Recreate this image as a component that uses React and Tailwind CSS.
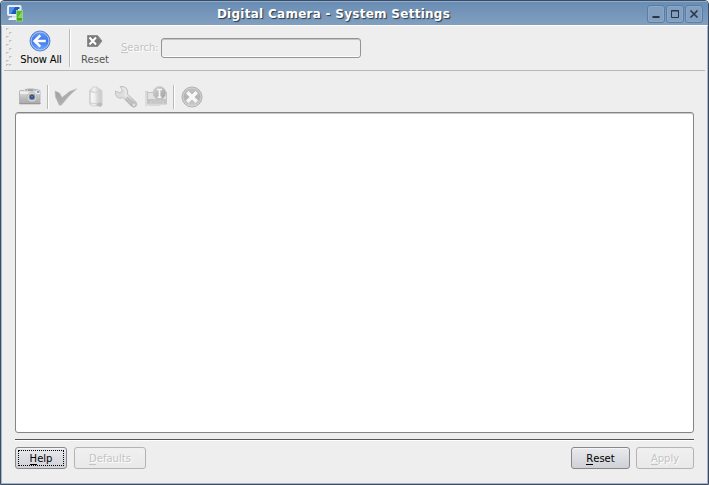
import React from 'react';

function AppIcon() {
  return (
    <svg width="18" height="18" viewBox="0 0 18 18">
      <rect x="0.500" y="0.500" width="13.500" height="10" rx="1" fill="#e9eff7" stroke="#e4ebf4" />
      <rect x="2" y="2" width="10.500" height="7" fill="#1c58bd" />
      <path d="M2 2h6L4 9H2z" fill="#4f92ea" />
      <rect x="5" y="11" width="5" height="2" fill="#cfd7df" />
      <path d="M2.500 12.500h8v2.500H1z" fill="#f1f3f5" />
      <rect x="9.500" y="5.500" width="6" height="10.500" fill="#58b82c" stroke="#a9d597" strokeWidth="0.800" />
      <rect x="11" y="4" width="3" height="1.500" fill="#dfe9da" />
      <path d="M11 12l4-5.500v9h-4z" fill="#86d95a" />
      <path d="M10 13h5v2.500h-5z" fill="#46a81f" />
    </svg>
  );
}

function BackIcon() {
  return (
    <svg width="22" height="22" viewBox="0 0 22 22">
      <defs>
        <linearGradient id="back" x1="0" y1="0" x2="0" y2="1">
          <stop offset="0" stopColor="#6c9bf0" />
          <stop offset="0.500" stopColor="#3a76ec" />
          <stop offset="1" stopColor="#78adff" />
        </linearGradient>
      </defs>
      <circle cx="11" cy="11" r="10" fill="url(#back)" stroke="#5f83cc" strokeWidth="1" />
      <circle cx="11" cy="11" r="8.900" fill="none" stroke="#a9c6fa" strokeWidth="0.900" />
      <path d="M11.300 5.300L5.500 11l5.800 5.700M6.500 11h10.300" fill="none" stroke="#fff" strokeWidth="2.500" />
    </svg>
  );
}

function ClearIcon() {
  return (
    <svg width="16" height="14" viewBox="0 0 16 14">
      <path d="M.5 1.500h10l4.500 5.500-4.500 5.500H.5z" fill="#7c7c7c" stroke="#8f8f8f" />
      <path d="M2.500 3.500l6.500 7M9 3.500l-6.500 7" stroke="#fff" strokeWidth="2" />
    </svg>
  );
}

function CameraIcon() {
  return (
    <svg width="24" height="24" viewBox="0 0 24 24">
      <defs>
        <linearGradient id="cam" x1="0" y1="0" x2="0" y2="1">
          <stop offset="0" stopColor="#e8e8e8" />
          <stop offset="0.600" stopColor="#bcbcbc" />
          <stop offset="1" stopColor="#a8a8a8" />
        </linearGradient>
      </defs>
      <path d="M2 5.500h4l1-1h12l3 1v13.500H1.500V6z" fill="url(#cam)" stroke="#adadad" strokeWidth="0.800" />
      <path d="M8.500 4h8l1 2h-10z" fill="#ddd" stroke="#a5a5a5" strokeWidth="0.800" />
      <path d="M2 6.500h20v2.500H2z" fill="#efefef" />
      <rect x="10" y="4.500" width="5" height="1.200" fill="#8c8c8c" />
      <circle cx="14" cy="12" r="4.900" fill="#dedede" stroke="#b0b0b0" strokeWidth="0.800" />
      <circle cx="14" cy="12" r="3.300" fill="#8c8c8c" />
      <circle cx="14" cy="12" r="2" fill="#173a8a" />
      <circle cx="14" cy="11.700" r="1" fill="#4f8be8" />
      <rect x="19" y="6" width="2.300" height="2" fill="#6c9ff0" />
      <path d="M1.500 18.500h21" stroke="#989898" />
    </svg>
  );
}

function CheckIcon() {
  return (
    <svg width="24" height="24" viewBox="0 0 24 24">
      <defs>
        <linearGradient id="chk" x1="0" y1="0" x2="1" y2="1">
          <stop offset="0" stopColor="#9c9c9c" />
          <stop offset="1" stopColor="#bdbdbd" />
        </linearGradient>
      </defs>
      <path d="M1 6L5.500 8 8 12.500 15.500 6.500 22.800 3.700 15 11 7.500 20 5.300 20.300 1.500 12z" fill="url(#chk)" stroke="#bcbcbc" strokeWidth="0.600" />
    </svg>
  );
}

function BatteryIcon() {
  return (
    <svg width="24" height="24" viewBox="0 0 24 24">
      <defs>
        <linearGradient id="bat" x1="0" y1="0" x2="1" y2="0">
          <stop offset="0" stopColor="#d2d2d2" />
          <stop offset="0.350" stopColor="#f4f4f4" />
          <stop offset="0.700" stopColor="#d4d4d4" />
          <stop offset="1" stopColor="#cacaca" />
        </linearGradient>
      </defs>
      <path d="M5.500 6Q6 4 8.500 3.500V2h5v1.500q4 .5 4.500 2.500v12.500q-1 2.500-6.500 2.500T5.500 18.500z" fill="url(#bat)" stroke="#d2d2d2" />
      <path d="M8 8v10" stroke="#fafafa" strokeWidth="1.500" />
      <path d="M5.500 6q5.500 3 12.500 0M5.500 17.500q5 2.500 12 0" fill="none" stroke="#d0d0d0" />
      <path d="M12 20l3-2.500 3 .5.500 2-2 2z" fill="#bcbcbc" />
    </svg>
  );
}

function WrenchIcon() {
  return (
    <svg width="24" height="24" viewBox="0 0 24 24">
      <defs>
        <linearGradient id="wr" x1="0" y1="0" x2="1" y2="1">
          <stop offset="0" stopColor="#dadada" />
          <stop offset="0.500" stopColor="#dedede" />
          <stop offset="1" stopColor="#b5b5b5" />
        </linearGradient>
      </defs>
      <path d="M6 1.500L8.500 5 6 8 1.500 6Q.5 9.500 3 12.200 5.500 14.200 9 12.600l8.500 8.700q2.300 1.800 4.300.2 2-1.900.4-4.300L13.500 9Q14.500 6 12.300 3.200 9.500.7 6 1.500z" fill="url(#wr)" stroke="#bebebe" strokeWidth="0.900" />
      <path d="M8 3q4 .5 4 4.500l-1.500 2 2.500 2" fill="none" stroke="#f4f4f4" />
      <path d="M13 12.500l7 6.500M11.500 14l6.500 6.500" stroke="#b8b8b8" strokeWidth="1.600" />
      <circle cx="20" cy="19.700" r="1.200" fill="#e6e6e6" />
    </svg>
  );
}

function CardInfoIcon() {
  return (
    <svg width="24" height="24" viewBox="0 0 24 24">
      <defs>
        <linearGradient id="inf" x1="0" y1="0" x2="1" y2="1">
          <stop offset="0" stopColor="#d4d4d4" />
          <stop offset="1" stopColor="#9e9e9e" />
        </linearGradient>
      </defs>
      <path d="M2 6v15.500M1 6.500h3" fill="none" stroke="#d0d0d0" strokeWidth="1.200" />
      <rect x="3.500" y="7.500" width="19" height="11.500" fill="#e2e2e2" stroke="#c4c4c4" />
      <path d="M4 14h18v4.500H4z" fill="#c3c3c3" />
      <path d="M4.500 19.500h12v1.500h-12z" fill="#d8d8d8" />
      <path d="M6 17h2m1-1h2m1 1h2m1-1h2m1 1h2" stroke="#d6d6d6" />
      <circle cx="15.500" cy="8" r="6.400" fill="url(#inf)" stroke="#c6c6c6" strokeWidth="0.800" />
      <path d="M13 4.500h5M15.500 4.500v7.500M13.500 12.300h4" fill="none" stroke="#f5f5f5" strokeWidth="1.700" />
    </svg>
  );
}

function CancelIcon() {
  return (
    <svg width="24" height="24" viewBox="0 0 24 24">
      <defs>
        <linearGradient id="can" x1="0" y1="0" x2="0" y2="1">
          <stop offset="0" stopColor="#c4c4c4" />
          <stop offset="0.500" stopColor="#b2b2b2" />
          <stop offset="1" stopColor="#d2d2d2" />
        </linearGradient>
      </defs>
      <circle cx="12" cy="12" r="10" fill="url(#can)" stroke="#b0b0b0" strokeWidth="1" />
      <circle cx="12" cy="12" r="9" fill="none" stroke="#d6d6d6" strokeWidth="0.800" />
      <path d="M7.300 7.300l9.400 9.400M16.700 7.300l-9.400 9.400" stroke="#f7f7f7" strokeWidth="3.600" />
    </svg>
  );
}

function TitleButton({ children }) {
  return (
    <div className="flex h-[18px] w-[18px] items-center justify-center rounded-[3px] border border-[#5c7da3] bg-[#819fc0] shadow-[inset_0_0_0_1px_#8ba7c5]">
      <svg width="16" height="16" viewBox="0 0 16 16" fill="none" stroke="#2b3544">{children}</svg>
    </div>
  );
}

function Label({ text }) {
  return (
    <span className="relative">
      {text[0]}
      <span className="absolute bottom-0 left-0 h-px w-[7px] bg-current" />
      {text.slice(1)}
    </span>
  );
}

function PushButton({ text, className }) {
  return (
    <button className={`flex h-[22px] items-center justify-center rounded-[3px] border leading-[13px] ${className}`}>
      <Label text={text} />
    </button>
  );
}

const active = 'border-[#85878c] bg-linear-to-b from-[#e9eaed] to-[#cfd1d7] text-black shadow-[inset_0_1px_0_#f5f5f7]';
const disabled = 'border-[#b4b4b4] bg-linear-to-b from-[#f0f0f0] to-[#e9e9e9] text-[#c3c3c3] [text-shadow:1px_1px_0_#fff]';

export default function App() {
  return (
    <div className="flex h-[485px] w-[709px] flex-col overflow-hidden rounded-t-[4px] border border-[#3d4c63] bg-[#eeeeee] font-['DejaVu_Sans',sans-serif] text-[10px] text-black">
      <header className="flex h-[24px] shrink-0 items-center border-t border-t-[#8faccb] bg-linear-to-b from-[#698db4] to-[#829fbe] pr-[5px] pl-[6px]">
        <AppIcon />
        <h1 className="flex-1 pr-[5px] text-center text-[12px] leading-[22px] font-bold tracking-[0.27px] whitespace-nowrap text-white [text-shadow:1px_1px_1px_#26364b]">
          Digital Camera - System Settings
        </h1>
        <div className="flex gap-px">
          <TitleButton><path d="M4.500 11h7" strokeWidth="2" /></TitleButton>
          <TitleButton><path d="M4.500 4.500h7v7h-7zM4 5h8" strokeWidth="1" /></TitleButton>
          <TitleButton><path d="M4.500 4.500l7 7M11.500 4.500l-7 7" strokeWidth="1.600" /></TitleButton>
        </div>
      </header>

      <div className="flex min-h-0 flex-1 flex-col border-x border-t border-b border-x-[#a5b5c9] border-t-white border-b-[#a5b5c9]">
        <div className="mx-[2px] flex h-[45px] shrink-0 border-b border-[#b9b9b9]">
          <svg className="mt-px ml-[2px]" width="7" height="42" fill="none" stroke="#bdbdbd">
            {[0, 8, 16, 24, 32].map((y) => (
              <path key={y} d={`M.5 ${y + 3}v-1.500h2M3.500 ${y + 7}v-1.500h2`} />
            ))}
            <path d="M.5 39v-1.500h2" />
          </svg>
          <div className="ml-[4px] flex w-[46px] flex-col items-center pt-[4px]">
            <BackIcon />
            <span className="mt-px ml-[2px] leading-[13px] tracking-[-0.15px] whitespace-nowrap">Show All</span>
          </div>
          <div className="mt-[3px] ml-[6px] h-[38px] w-[2px] border-r border-l border-r-white border-l-[#b9b9b9]" />
          <div className="ml-[6px] flex w-[36px] flex-col items-center pt-[8px] text-[#555]">
            <ClearIcon />
            <span className="mt-[5px] leading-[13px]">Reset</span>
          </div>
          <div className="mt-[15px] ml-[8px] w-[40px] leading-[13px] whitespace-nowrap text-[#c3c3c3] [text-shadow:1px_1px_0_#fff]">
            <Label text="Search:" />
          </div>
          <div className="mt-[12px] h-[20px] w-[200px] rounded-[3px] border border-[#949494] shadow-[inset_0_1px_0_#c3c3c3,inset_0_-1px_0_#fff]" />
        </div>

        <main className="flex min-h-0 flex-1 flex-col px-[13px] pt-[14px]">
          <div className="flex h-[27px] shrink-0 items-start pl-[3px]">
            <CameraIcon />
            <div className="ml-[5px] h-[24px] w-[2px] border-r border-l border-r-white border-l-[#b9b9b9]" />
            <div className="ml-[5px] flex gap-[6px]">
              <CheckIcon />
              <BatteryIcon />
              <WrenchIcon />
              <CardInfoIcon />
            </div>
            <div className="ml-[5px] h-[24px] w-[2px] border-r border-l border-r-white border-l-[#b9b9b9]" />
            <div className="ml-[5px]"><CancelIcon /></div>
          </div>
          <div className="h-[321px] shrink-0 rounded-[3px] border border-[#858585] bg-white shadow-[inset_0_1px_0_#c8c8c8]" />
          <div className="mt-[6px] h-[2px] shrink-0 border-t border-b border-t-[#555] border-b-white" />
          <footer className="mt-[6px] flex shrink-0">
            <div className="relative">
              <PushButton text="Help" className={`w-[52px] ${active}`} />
              <div className="pointer-events-none absolute inset-[3px] border border-dotted border-black" />
            </div>
            <PushButton text="Defaults" className={`ml-[7px] w-[72px] ${disabled}`} />
            <PushButton text="Reset" className={`ml-auto w-[59px] ${active}`} />
            <PushButton text="Apply" className={`ml-[6px] w-[58px] ${disabled}`} />
          </footer>
        </main>
      </div>
    </div>
  );
}
